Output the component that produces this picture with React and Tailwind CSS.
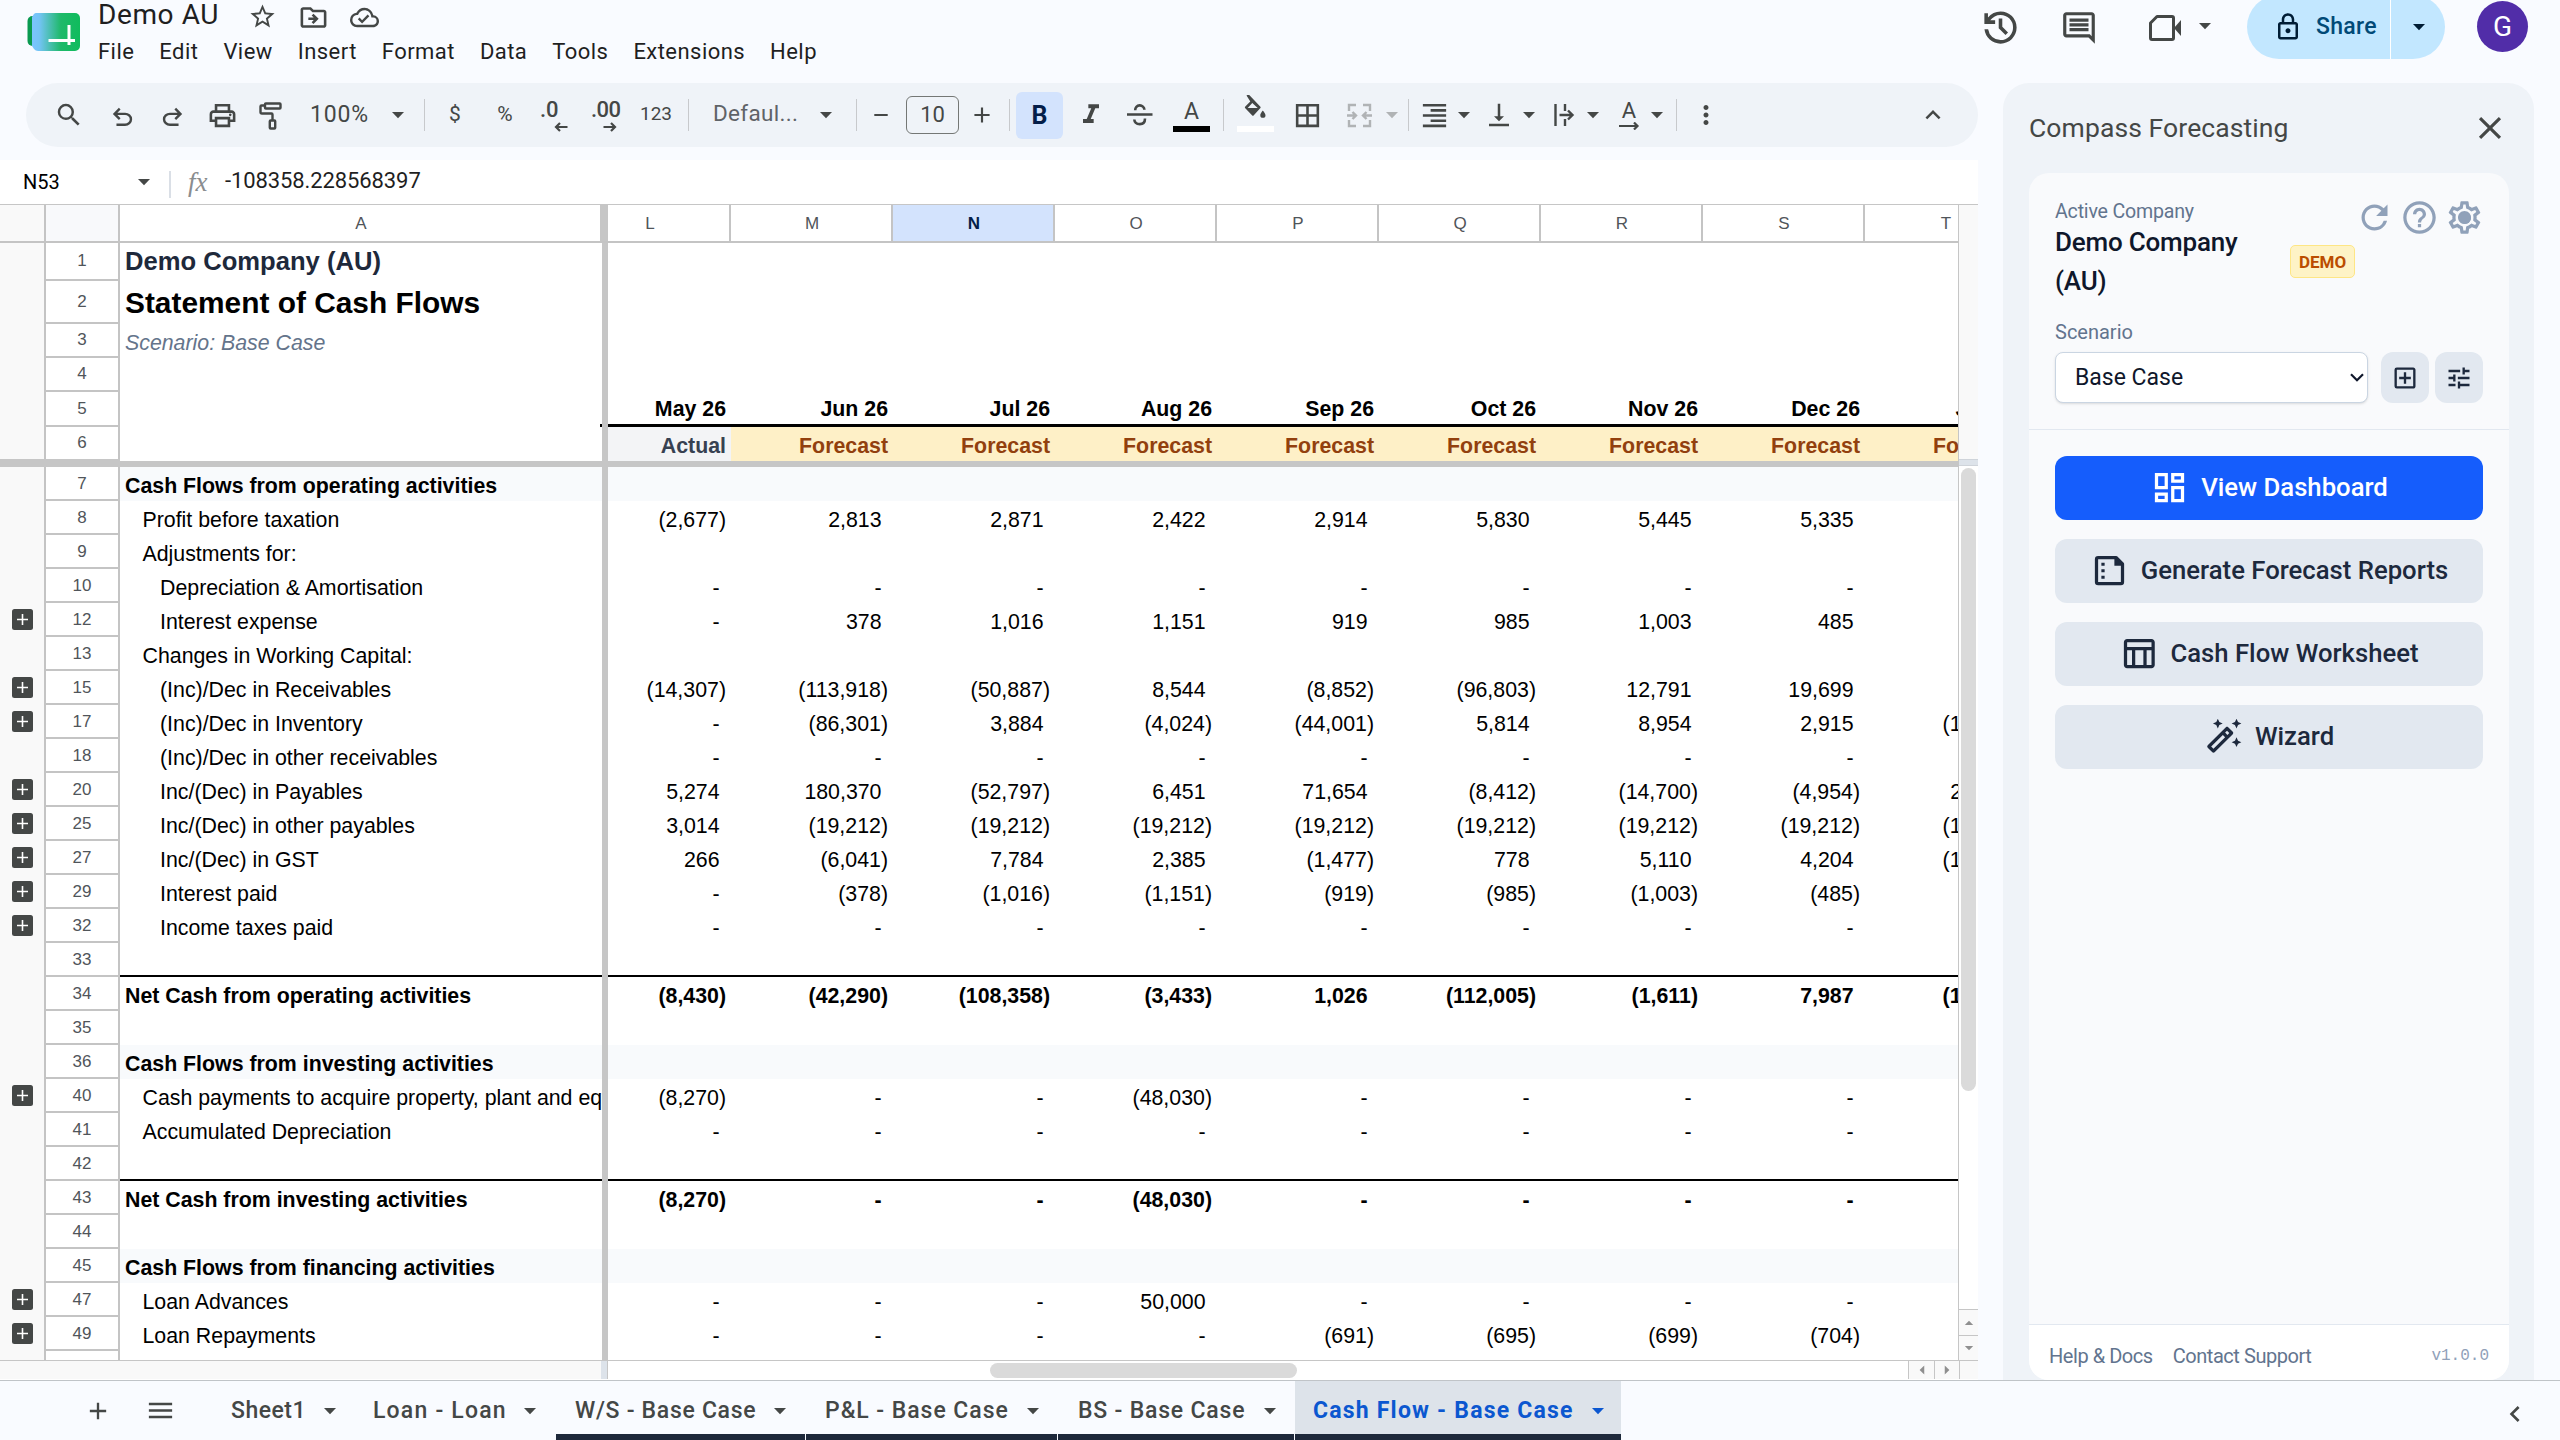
import {
    MdSearch, MdOutlinePrint, MdRemove, MdAdd, MdFormatItalic,
    MdBorderAll, MdFormatAlignRight, MdVerticalAlignBottom, MdMoreVert, MdKeyboardArrowUp,
    MdStarBorder, MdOutlineDriveFileMove, MdOutlineCloudDone, MdOutlineComment, MdOutlineLock,
    MdClose, MdRefresh, MdHelpOutline, MdOutlineSettings, MdOutlineAddBox, MdTune, MdOutlineDashboard,
    MdOutlineTableChart, MdOutlineAutoFixHigh, MdMenu, MdKeyboardArrowLeft,
} from "react-icons/md";

const menus = ["File", "Edit", "View", "Insert", "Format", "Data", "Tools", "Extensions", "Help"];

const columns = ["L", "M", "N", "O", "P", "Q", "R", "S", "T"];
const months = ["May 26", "Jun 26", "Jul 26", "Aug 26", "Sep 26", "Oct 26", "Nov 26", "Dec 26", "Jan 27"];

const dashes = ["-", "-", "-", "-", "-", "-", "-", "-", "-"];

// Scrolling rows. kind: section = shaded heading, total = bold result, rule = empty row with a bottom line
const rows = [
    { n: 7, label: "Cash Flows from operating activities", kind: "section" },
    { n: 8, label: "Profit before taxation", indent: 1, values: ["(2,677)", "2,813", "2,871", "2,422", "2,914", "5,830", "5,445", "5,335", "5,120"] },
    { n: 9, label: "Adjustments for:", indent: 1 },
    { n: 10, label: "Depreciation & Amortisation", indent: 2, values: dashes },
    { n: 12, label: "Interest expense", indent: 2, group: true, values: ["-", "378", "1,016", "1,151", "919", "985", "1,003", "485", "480"] },
    { n: 13, label: "Changes in Working Capital:", indent: 1 },
    { n: 15, label: "(Inc)/Dec in Receivables", indent: 2, group: true, values: ["(14,307)", "(113,918)", "(50,887)", "8,544", "(8,852)", "(96,803)", "12,791", "19,699", "9,120"] },
    { n: 17, label: "(Inc)/Dec in Inventory", indent: 2, group: true, values: ["-", "(86,301)", "3,884", "(4,024)", "(44,001)", "5,814", "8,954", "2,915", "(10,410)"] },
    { n: 18, label: "(Inc)/Dec in other receivables", indent: 2, values: dashes },
    { n: 20, label: "Inc/(Dec) in Payables", indent: 2, group: true, values: ["5,274", "180,370", "(52,797)", "6,451", "71,654", "(8,412)", "(14,700)", "(4,954)", "20,310"] },
    { n: 25, label: "Inc/(Dec) in other payables", indent: 2, group: true, values: ["3,014", "(19,212)", "(19,212)", "(19,212)", "(19,212)", "(19,212)", "(19,212)", "(19,212)", "(19,212)"] },
    { n: 27, label: "Inc/(Dec) in GST", indent: 2, group: true, values: ["266", "(6,041)", "7,784", "2,385", "(1,477)", "778", "5,110", "4,204", "(10,208)"] },
    { n: 29, label: "Interest paid", indent: 2, group: true, values: ["-", "(378)", "(1,016)", "(1,151)", "(919)", "(985)", "(1,003)", "(485)", "(480)"] },
    { n: 32, label: "Income taxes paid", indent: 2, group: true, values: dashes },
    { n: 33, kind: "rule" },
    { n: 34, label: "Net Cash from operating activities", kind: "total", values: ["(8,430)", "(42,290)", "(108,358)", "(3,433)", "1,026", "(112,005)", "(1,611)", "7,987", "(15,280)"] },
    { n: 35 },
    { n: 36, label: "Cash Flows from investing activities", kind: "section" },
    { n: 40, label: "Cash payments to acquire property, plant and equipment", indent: 1, group: true, values: ["(8,270)", "-", "-", "(48,030)", "-", "-", "-", "-", "-"] },
    { n: 41, label: "Accumulated Depreciation", indent: 1, values: dashes },
    { n: 42, kind: "rule" },
    { n: 43, label: "Net Cash from investing activities", kind: "total", values: ["(8,270)", "-", "-", "(48,030)", "-", "-", "-", "-", "-"] },
    { n: 44 },
    { n: 45, label: "Cash Flows from financing activities", kind: "section" },
    { n: 47, label: "Loan Advances", indent: 1, group: true, values: ["-", "-", "-", "50,000", "-", "-", "-", "-", "-"] },
    { n: 49, label: "Loan Repayments", indent: 1, group: true, values: ["-", "-", "-", "-", "(691)", "(695)", "(699)", "(704)", "(708)"] },
];

const sheets = [
    { name: "Sheet1", box: "w-[143px] pl-[18px]", text: "w-[75px] tracking-[0.5px]" },
    { name: "Loan - Loan", box: "w-[199px] pl-[17px]", text: "w-[133px] tracking-[1.2px]" },
    { name: "W/S - Base Case", box: "w-[249px] pl-[19px]", text: "w-[181px] tracking-[0.7px]", line: true },
    { name: "P&L - Base Case", box: "w-[251px] pl-[19px]", text: "w-[184px] tracking-[0.95px]", line: true },
    { name: "BS - Base Case", box: "w-[236px] pl-[20px]", text: "w-[168px] tracking-[0.8px]", line: true },
    { name: "Cash Flow - Base Case", box: "w-[326px] pl-[18px]", text: "w-[261px] tracking-[1.2px] font-bold", line: true, active: true },
];

function Symbol({ d, className }) {
    return (
        <svg viewBox="0 -960 960 960" fill="currentColor" className={className}>
            <path d={d} />
        </svg>
    );
}

function Caret({ className = "" }) {
    return (
        <svg viewBox="0 0 14 8" fill="currentColor" className={`w-[14px] h-2 shrink-0 ${className}`}>
            <path d="M1 1h12L7 7.2z" />
        </svg>
    );
}

function Divider({ className }) {
    return <div className={`w-px h-8 bg-[#c7c9cc] shrink-0 ${className}`}></div>;
}

function Logo() {
    return (
        <svg viewBox="0 0 54 40" className="w-[54px] h-10">
            <defs>
                <linearGradient id="logoFill" x1="0" x2="1" y1="0" y2="0">
                    <stop offset="0" stopColor="#7cc4ff" />
                    <stop offset="0.15" stopColor="#74c4f5" />
                    <stop offset="0.6" stopColor="#1fb96a" />
                    <stop offset="1" stopColor="#0fbc5c" />
                </linearGradient>
            </defs>
            <rect x="0.5" y="4" width="20" height="30" rx="5" fill="#0a9a50" />
            <path d="M9 1h39a5 5 0 0 1 5 5v28a5 5 0 0 1-5 5H11a5 5 0 0 1-4-2l-2-3V5l2-3a4 4 0 0 1 2-1z" fill="url(#logoFill)" />
            <path d="M21.500 28.500h26.500M42 13v20" stroke="#fff" strokeWidth="3" fill="none" />
        </svg>
    );
}

function Header() {
    return (
        <header className="h-[83px] flex items-start overflow-hidden shrink-0">
            <div className="pl-[27px] pt-3">
                <Logo />
            </div>
            <div className="pl-[17px]">
                <div className="flex h-[33px] text-[#444746]">
                    <h1 className="w-[150px] text-[28px] leading-[29px] tracking-[0.6px] text-[#1f1f1f]">Demo AU</h1>
                    <MdStarBorder className="size-[29px] mt-0.5" />
                    <MdOutlineDriveFileMove className="size-[31px] mt-0.5 ml-[21px]" />
                    <MdOutlineCloudDone className="size-[29px] mt-[3px] ml-[21px]" />
                </div>
                <nav className="flex gap-[25px] text-[22px] leading-[37px] tracking-[0.45px] text-[#1f1f1f]">
                    {menus.map((m) => (
                        <span key={m}>{m}</span>
                    ))}
                </nav>
            </div>

            <div className="ml-auto flex items-start text-[#444746]">
                <Symbol
                    className="size-[43px] mt-[6px]"
                    d="M480-120q-138 0-240.500-91.500T122-440h82q14 104 92.500 172T480-200q117 0 198.500-81.500T760-480q0-117-81.500-198.500T480-760q-69 0-129 32t-101 88h110v80H120v-240h80v94q51-64 124.500-99T480-840q75 0 140.500 28.500t114 77q48.500 48.500 77 114T840-480q0 75-28.500 140.500t-77 114q-48.500 48.500-114 77T480-120Zm112-192L440-464v-216h80v184l128 128-56 56Z"
                />
                <MdOutlineComment className="size-[38px] mt-[9px] ml-[38px]" />
                <svg viewBox="0 0 34 28" className="w-[34px] h-7 mt-[14px] ml-[50px]" fill="none" stroke="currentColor" strokeWidth="3">
                    <path d="M9 2.500h15a1.500 1.500 0 0 1 1.500 1.500v20a1.500 1.500 0 0 1-1.500 1.500H4a1.500 1.500 0 0 1-1.500-1.500V9z" strokeLinejoin="round" />
                    <path d="M26 14l7-8v16z" fill="currentColor" stroke="none" />
                </svg>
                <Caret className="mt-[22px] ml-4" />
                <div className="-mt-[5px] ml-[35px] w-[198px] h-16 rounded-full bg-[#c2e7ff] flex overflow-hidden text-[#004a77]">
                    <div className="w-[144px] flex items-center pl-[26px] border-r border-white">
                        <MdOutlineLock className="size-[30px] text-[#001d35]" />
                        <span className="pl-[13px] text-[23px] font-medium tracking-[0.3px]">Share</span>
                    </div>
                    <div className="flex-1 flex items-center pl-[21px] text-[#001d35]">
                        <Caret />
                    </div>
                </div>
                <div className="mt-px ml-8 mr-8 size-[51px] rounded-full bg-[#512da8] text-white text-[28px] flex items-center justify-center">G</div>
            </div>
        </header>
    );
}

function Toolbar() {
    return (
        <div className="ml-[26px] h-16 rounded-full bg-[#eff3f8] flex items-center text-[#444746] shrink-0">
            <MdSearch className="size-[30px] ml-7 shrink-0" />
            <Symbol
                className="size-[29px] ml-6 mt-1 shrink-0"
                d="M280-200v-80h284q63 0 109.500-40T720-420q0-60-46.500-100T564-560H312l104 104-56 56-200-200 200-200 56 56-104 104h252q97 0 166.500 63T800-420q0 94-69.500 157T564-200H280Z"
            />
            <Symbol
                className="size-[29px] ml-[21px] mt-1 shrink-0 -scale-x-100"
                d="M280-200v-80h284q63 0 109.500-40T720-420q0-60-46.500-100T564-560H312l104 104-56 56-200-200 200-200 56 56-104 104h252q97 0 166.500 63T800-420q0 94-69.500 157T564-200H280Z"
            />
            <MdOutlinePrint className="size-[31px] ml-5 shrink-0" />
            <svg viewBox="0 0 23 28" className="w-[23px] h-7 ml-[21px] mt-0.5 shrink-0" fill="none" stroke="currentColor" strokeWidth="2.400">
                <rect x="6" y="1.500" width="15.500" height="5" rx="0.800" />
                <path d="M6 3.500H2.500a1 1 0 0 0-1 1V10a1.500 1.500 0 0 0 1.500 1.500h9.500a1 1 0 0 1 1 1V18" />
                <rect x="10.800" y="18.500" width="5.400" height="8" rx="0.800" />
            </svg>
            <span className="w-[60px] ml-[28px] text-[23px] tracking-[0.8px] whitespace-nowrap">100%</span>
            <Caret className="ml-[21px]" />
            <Divider className="ml-[19px]" />
            <span className="w-4 ml-[22px] text-[21px] text-center">$</span>
            <span className="w-5 ml-8 text-[21px] text-center">%</span>
            <div className="w-7 h-[30px] ml-[25px] text-[22px] font-medium leading-[20px] relative">
                .0
                <svg viewBox="0 0 14 10" className="absolute right-0 -bottom-0.5 w-[14px] h-[10px]" fill="none" stroke="currentColor" strokeWidth="2.200">
                    <path d="M6 1L2 5l4 4M2 5h11.500" />
                </svg>
            </div>
            <div className="w-7 h-[30px] ml-[23px] text-[22px] font-medium leading-[20px] tracking-[-0.5px] relative">
                .00
                <svg viewBox="0 0 14 10" className="absolute right-0.5 -bottom-0.5 w-[14px] h-[10px]" fill="none" stroke="currentColor" strokeWidth="2.200">
                    <path d="M8 1l4 4-4 4M12 5H0.500" />
                </svg>
            </div>
            <span className="w-8 ml-[21px] text-[19px] -mt-0.5">123</span>
            <Divider className="ml-4" />
            <span className="w-[86px] ml-6 text-[22.500px] tracking-[0.3px] text-[#5f6368] -mt-0.5 whitespace-nowrap">Defaul...</span>
            <Caret className="ml-5" />
            <Divider className="ml-[23px]" />
            <MdRemove className="w-5 h-7 scale-[1.15] ml-[14px]" />
            <span className="w-[53px] h-[38px] ml-[15px] border-[1.500px] border-[#747775] rounded-md text-[22px] leading-[35px] text-center">10</span>
            <MdAdd className="w-5 h-7 scale-[1.3] ml-[13px]" />
            <Divider className="ml-[17px]" />
            <span className="w-[47px] h-[47px] ml-[6px] rounded-md bg-[#d3e3fd] text-[#041e49] text-[25px] leading-[47px] font-bold text-center">B</span>
            <MdFormatItalic className="size-[32px] ml-3" />
            <svg viewBox="0 0 30 30" className="size-[30px] ml-[18px]" fill="none" stroke="currentColor" strokeWidth="2.600">
                <path d="M2 14.500h25.500M10.200 10.200a4.600 4.600 0 0 1 9.200-.4M20 18.500c0 3.500-2 5.600-5.200 5.600s-5.300-1.900-5.500-4.600" />
            </svg>
            <span className="w-[37px] ml-[18px] h-[33px] border-b-[6px] border-black text-[23px] leading-[25px] text-center">A</span>
            <Divider className="ml-[13px]" />
            <div className="w-[37px] ml-[13px] h-[33px] border-b-[6px] border-white flex justify-center pr-[3px]">
                <svg viewBox="0 0 24 28" className="w-6 h-7 -mt-1" fill="currentColor">
                    <path d="M4.500 0.500l2-1.300 11.700 12.400a1.200 1.200 0 0 1 0 1.700l-6.400 7a1.200 1.200 0 0 1-1.800 0l-6.700-7a1.200 1.200 0 0 1 0-1.700l5-5.200zM10.300 8l-4.600 5h10z" fillRule="evenodd" />
                    <path d="M20.800 15.500s2.700 3 2.700 4.700a2.600 2.600 0 0 1-5.200 0c0-1.700 2.500-4.700 2.500-4.700z" />
                </svg>
            </div>
            <MdBorderAll className="size-[31px] ml-[18px]" />
            <svg viewBox="0 0 31 31" className="size-[31px] ml-[21px] text-[#b0b3b5]" fill="none" stroke="currentColor" strokeWidth="2.400">
                <path d="M12 5H5v6M5 20v6h7M19 5h7v6M26 20v6h-7M3 15.500h9M8.500 12l3.500 3.500L8.500 19M28 15.500h-9M22.500 12L19 15.500l3.500 3.500" />
            </svg>
            <Caret className="ml-[10px] text-[#b0b3b5]" />
            <Divider className="ml-[9px]" />
            <MdFormatAlignRight className="size-[31px] ml-[10px]" />
            <Caret className="ml-[7px]" />
            <MdVerticalAlignBottom className="size-[30px] ml-[13px]" />
            <Caret className="ml-2" />
            <svg viewBox="0 0 30 30" className="size-[30px] ml-[13px]" fill="none" stroke="currentColor" strokeWidth="2.400">
                <path d="M6.500 4v22M16 4v7M16 19v7M10.500 15h12.500M19 10.500l4.500 4.500-4.500 4.500" />
            </svg>
            <Caret className="ml-[7px]" />
            <div className="w-[30px] h-[30px] ml-[14px] text-[22px] leading-[22px] text-center relative">
                A
                <svg viewBox="0 0 22 8" className="absolute left-1 bottom-0 w-[22px] h-2" fill="none" stroke="currentColor" strokeWidth="2.200">
                    <path d="M1 4h18M16 0.500L19.500 4 16 7.500" />
                </svg>
            </div>
            <Caret className="ml-[6px]" />
            <Divider className="ml-3" />
            <MdMoreVert className="size-[30px] ml-[14px]" />
            <MdKeyboardArrowUp className="size-[30px] ml-auto mr-[30px]" />
        </div>
    );
}

function FormulaBar() {
    return (
        <div className="h-11 mt-[13px] bg-white flex items-center shrink-0">
            <span className="w-[137px] pl-[23px] text-[20px] text-black">N53</span>
            <Caret className="text-[#444746]" />
            <div className="w-0.5 h-[27px] ml-[18px] mr-[17px] mt-1 bg-[#dadfe6]"></div>
            <span className="w-[37px] text-[27px] leading-[30px] italic text-[#8a8d8f] font-['Liberation_Serif',serif]">fx</span>
            <span className="text-[22px] tracking-[-0.1px] text-[#1f1f1f] -mt-1">-108358.228568397</span>
        </div>
    );
}

// Grouping gutter and row number
function RowHead({ n, group, className = "h-[34px]", last }) {
    return (
        <div className={`w-[120px] flex shrink-0 ${className}`}>
            <div className="w-11 flex items-center pl-3 pb-px bg-[#f9f9f9]">
                {group && (
                    <svg viewBox="0 0 21 21" className="size-[21px]">
                        <rect width="21" height="21" rx="2.500" fill="#444746" />
                        <path d="M10.500 5v11M5 10.500h11" stroke="#fff" strokeWidth="1.600" />
                    </svg>
                )}
            </div>
            <div
                className={`w-[76px] border-x-2 border-[#c4c4c4] bg-white text-[17px] text-[#50555a] flex items-center justify-center ${
                    last ? "" : "border-b-2"
                }`}
            >
                {n}
            </div>
        </div>
    );
}

function FreezeBar() {
    return <div className="w-[6px] bg-[#c6c6c6] shrink-0 self-stretch"></div>;
}

function DataRow({ row }) {
    const bold = row.kind === "section" || row.kind === "total";
    const bg = row.kind === "section" ? "bg-[#f8fafc]" : "";
    const rule = row.kind === "rule" ? "after:absolute after:inset-x-0 after:bottom-0 after:h-0.5 after:bg-black" : "";
    const pad = row.indent === 2 ? "pl-[40px]" : row.indent === 1 ? "pl-[22.500px]" : "pl-[5px]";

    return (
        <div className={`flex h-[34px] leading-[38px] whitespace-nowrap ${bold ? "font-bold" : ""}`}>
            <div className="font-normal leading-[31px]">
                <RowHead n={row.n} group={row.group} />
            </div>
            <div className={`w-[482px] shrink-0 relative ${bg} ${rule}`}>
                <div className={`h-[34px] overflow-hidden ${pad}`}>{row.label}</div>
            </div>
            <FreezeBar />
            <div className={`w-[1350px] relative ${bg} ${rule}`}>
                <div className="h-[34px] flex overflow-hidden">
                    <div className="flex -ml-[39px]">
                        {row.values?.map((v, i) => (
                            <div key={i} className={`w-[162px] shrink-0 text-right ${v.startsWith("(") ? "pr-[5px]" : "pr-[11.500px]"}`}>
                                {v}
                            </div>
                        ))}
                    </div>
                </div>
            </div>
        </div>
    );
}

function Grid() {
    return (
        <div className="h-[1157px] w-[1978px] border-t border-[#c6c6c6] bg-white flex font-['Liberation_Sans',Arial,sans-serif] text-[21.330px] text-black overflow-hidden">
            <div className="w-[1958px] shrink-0 overflow-hidden">
                {/* Column letters */}
                <div className="flex h-[38px] border-b-2 border-[#c4c4c4] text-[17px] leading-[37px] text-center text-[#50555a]">
                    <div className="w-11 bg-[#f9f9f9] shrink-0"></div>
                    <div className="w-[76px] border-x-2 border-[#c4c4c4] bg-[#f8f9fb] shrink-0"></div>
                    <div className="w-[480px] shrink-0 pl-0.5">A</div>
                    <div className="w-2 bg-[#c6c6c6] shrink-0"></div>
                    <div className="w-[1350px] flex overflow-hidden">
                        <div className="flex -ml-[39px]">
                            {columns.map((c) => (
                                <div
                                    key={c}
                                    className={`w-[162px] pl-0.5 shrink-0 border-r-2 border-[#c4c4c4] ${
                                        c === "N" ? "bg-[#d3e3fd] font-bold text-[#041e49]" : ""
                                    }`}
                                >
                                    {c}
                                </div>
                            ))}
                        </div>
                    </div>
                </div>

                {/* Frozen rows */}
                <div className="flex h-[218px]">
                    <div>
                        <RowHead n={1} className="h-[38px]" />
                        <RowHead n={2} className="h-[43px]" />
                        <RowHead n={3} />
                        <RowHead n={4} />
                        <RowHead n={5} className="h-[35px]" />
                        <RowHead n={6} className="h-8" last />
                        <div className="h-0.5 bg-[#c6c6c6]"></div>
                    </div>
                    <div className="w-[482px] pl-[5px] whitespace-nowrap shrink-0">
                        <div className="h-[38px] text-[25.600px] leading-[37px] font-bold text-[#1e293b]">Demo Company (AU)</div>
                        <div className="h-[43px] text-[29.870px] leading-[44px] font-bold">Statement of Cash Flows</div>
                        <div className="h-[34px] leading-[38px] italic text-[#64748b]">Scenario: Base Case</div>
                        <div className="h-[66px]"></div>
                        <div className="h-[3px] w-0.5 ml-[475px] bg-black"></div>
                    </div>
                    <FreezeBar />
                    <div className="w-[1350px] overflow-hidden pt-[149px] font-bold">
                        <div className="h-[35px] w-[1500px] -ml-[39px] flex border-b-[3px] border-black leading-[34px] text-right">
                            {months.map((m) => (
                                <div key={m} className="w-[162px] shrink-0 pr-[5px]">{m}</div>
                            ))}
                        </div>
                        <div className="h-[34px] -ml-[39px] flex leading-[38px] text-right">
                            {months.map((m, i) => (
                                <div
                                    key={m}
                                    className={`w-[162px] shrink-0 pr-[5px] ${
                                        i === 0 ? "bg-[#f3f4f6] text-[#374151]" : "bg-[#fef0c7] text-[#92400e]"
                                    }`}
                                >
                                    {i === 0 ? "Actual" : "Forecast"}
                                </div>
                            ))}
                        </div>
                    </div>
                </div>
                <div className="h-[6px] bg-[#c6c6c6]"></div>

                {rows.map((row) => (
                    <DataRow key={row.n} row={row} />
                ))}
                <div className="flex h-[9px]">
                    <RowHead className="h-[9px]" last />
                    <div className="w-[482px] shrink-0"></div>
                    <FreezeBar />
                </div>
            </div>

            {/* Vertical scrollbar */}
            <div className="w-5 border-l border-[#c6c6c6] flex flex-col">
                <div className="h-[254px] bg-[#f9f9f9]"></div>
                <div className="h-[7px] bg-[#dde3ea] border-y border-[#cfd4da]"></div>
                <div className="mt-0.5 w-[15px] h-[623px] ml-0.5 rounded-full bg-[#dadada]"></div>
                <div className="mt-auto h-[26px] border-t border-[#c6c6c6] bg-[#f9f9f9] flex items-center justify-center text-[#8f8f8f]">
                    <Caret className="scale-[0.7] rotate-180" />
                </div>
                <div className="h-[25px] border-t border-[#c6c6c6] bg-[#f9f9f9] flex items-center justify-center text-[#8f8f8f]">
                    <Caret className="scale-[0.7]" />
                </div>
            </div>
        </div>
    );
}

function HorizontalScroll() {
    return (
        <div className="h-5 w-[1978px] border-t border-[#c6c6c6] flex shrink-0 bg-white pb-px">
            <div className="w-[601px] bg-[#f9f9f9]"></div>
            <div className="w-[6px] bg-[#dde3ea]"></div>
            <div className="w-[1301px] border-l border-[#c6c6c6] pl-[382px] pt-0.5">
                <div className="w-[307px] h-[15px] rounded-full bg-[#dadada]"></div>
            </div>
            <div className="w-[26px] shrink-0 border-l border-[#c6c6c6] bg-[#f9f9f9] text-[#8f8f8f] flex items-center justify-center">
                <Caret className="scale-[0.75] rotate-90" />
            </div>
            <div className="w-[25px] shrink-0 border-l border-[#c6c6c6] bg-[#f9f9f9] text-[#8f8f8f] flex items-center justify-center">
                <Caret className="scale-[0.75] -rotate-90" />
            </div>
            <div className="flex-1 border-l border-[#c6c6c6] bg-[#f9f9f9]"></div>
        </div>
    );
}

function ReportIcon({ className }) {
    return (
        <svg viewBox="0 0 24 24" fill="none" stroke="currentColor" strokeWidth="2" className={className}>
            <path d="M16 4H5a1 1 0 0 0-1 1v14a1 1 0 0 0 1 1h14a1 1 0 0 0 1-1V8z" strokeLinejoin="round" />
            <path d="M15 3.500V9h5.500z" fill="currentColor" stroke="none" />
            <path d="M7 7.200h2v1.800H7zM7 11.200h2V13H7zM7 15.200h2V17H7z" fill="currentColor" stroke="none" />
        </svg>
    );
}

const actions = [
    { name: "View Dashboard", icon: MdOutlineDashboard, primary: true },
    { name: "Generate Forecast Reports", icon: ReportIcon },
    { name: "Cash Flow Worksheet", icon: MdOutlineTableChart },
    { name: "Wizard", icon: MdOutlineAutoFixHigh },
];

function SidePanel() {
    return (
        <aside className="ml-[25px] w-[531px] h-[1297px] rounded-t-[26px] bg-[#eff3f8] pl-[26px] pr-[25px] flex flex-col">
            <div className="h-[90px] flex items-center justify-between text-[#444746] shrink-0">
                <h2 className="text-[26.500px] leading-[38px] tracking-[0.1px]">Compass Forecasting</h2>
                <MdClose className="size-[38px]" />
            </div>

            <div className="flex-1 rounded-[20px] bg-[#f9fafc] overflow-hidden flex flex-col">
                <div className="h-[257px] border-b border-[#e2e8f0] px-[26px] shrink-0">
                    <div className="flex justify-between pt-[25px] h-[127px]">
                        <div className="w-[300px]">
                            <div className="text-[19.600px] leading-[26px] pt-px tracking-[-0.2px] text-[#62748e]">Active Company</div>
                            <div className="flex items-center justify-between">
                                <div className="text-[26px] leading-[39px] tracking-[-0.200px] -mt-0.5 font-medium text-[#0f172b] w-[200px]">Demo Company (AU)</div>
                                <span className="h-[33px] w-[65px] mb-[4px] rounded-[5px] border border-[#fee685] bg-[#fef3c6] text-[#bb4d00] text-[17px] leading-[32px] font-bold text-center">DEMO</span>
                            </div>
                        </div>
                        <div className="flex gap-[6px] text-[#90a1b9] -mr-px">
                            <MdRefresh className="size-[39px]" />
                            <MdHelpOutline className="size-[39px]" />
                            <span className="relative size-[39px]">
                                <MdOutlineSettings className="size-[39px]" />
                                <span className="absolute left-[13.500px] top-[13.500px] size-3 rounded-full bg-[#90a1b9]"></span>
                            </span>
                        </div>
                    </div>
                    <div className="text-[20px] leading-[26px] mt-[19px] text-[#62748e]">Scenario</div>
                    <div className="flex mt-[7px]">
                        <div className="w-[313px] h-[51px] rounded-lg border border-[#cad5e2] bg-white shadow-sm flex items-center justify-between pl-[19px] pr-[3px] text-[23px] text-[#0f172b]">
                            <span className="pt-0.5">Base Case</span>
                            <svg viewBox="0 0 14 9" className="w-[14px] h-[9px]" fill="none" stroke="currentColor" strokeWidth="2.200">
                                <path d="M1 1.200l6 6 6-6" />
                            </svg>
                        </div>
                        <div className="size-12 h-[51px] ml-[13px] rounded-xl bg-[#e2e8f0] flex items-center justify-center text-[#1d293d]">
                            <MdOutlineAddBox className="size-7" />
                        </div>
                        <div className="size-12 h-[51px] ml-[6px] rounded-xl bg-[#e2e8f0] flex items-center justify-center text-[#1d293d]">
                            <MdTune className="size-7" />
                        </div>
                    </div>
                </div>

                <div className="flex-1 px-[26px] pt-[26px] flex flex-col gap-[19px]">
                    {actions.map((a) => (
                        <button
                            key={a.name}
                            className={`h-16 pb-px rounded-xl flex items-center justify-center gap-3 text-[25.700px] font-medium ${
                                a.primary ? "bg-[#155dfc] text-white" : "bg-[#e2e8f0] text-[#1d293d]"
                            }`}
                        >
                            <a.icon className="size-[39px]" />
                            {a.name}
                        </button>
                    ))}
                </div>

                <div className="h-[56px] border-t border-[#e2e8f0] bg-white flex items-center px-5 text-[20px] tracking-[-0.450px] text-[#62748e]">
                    <span className="pt-1.5">Help & Docs</span>
                    <span className="pt-1.5 pl-5">Contact Support</span>
                    <span className="ml-auto pt-1.5 font-['Liberation_Mono',monospace] text-[16px] tracking-normal text-[#90a1b9]">v1.0.0</span>
                </div>
            </div>
        </aside>
    );
}

function SheetTabs() {
    return (
        <footer className="h-[60px] border-t border-[#c0c4c8] bg-[#f9fbff] flex text-[#444746] shrink-0">
            <div className="w-[213px] flex items-center pl-[84px]">
                <MdAdd className="size-[28px]" />
                <MdMenu className="size-[31px] ml-[33px]" />
            </div>
            {sheets.map((s) => (
                <div
                    key={s.name}
                    className={`${s.box} h-full flex items-center whitespace-nowrap text-[23px] font-medium ${
                        s.line ? "border-b-[6px] border-[#1e293b] ml-px pt-[6px]" : ""
                    } ${s.active ? "bg-[#dde3ea] text-[#0b57d0]" : ""}`}
                >
                    <span className={`pt-0.5 ${s.text}`}>{s.name}</span>
                    <Caret className="ml-[17px]" />
                </div>
            ))}
            <MdKeyboardArrowLeft className="size-[32px] ml-auto mr-[29px] mt-[17px]" />
        </footer>
    );
}

function App() {
    return (
        <div className="w-[2560px] h-[1440px] overflow-hidden bg-[#f9fbff] flex flex-col font-[Roboto,sans-serif]">
            <Header />
            <div className="flex h-[1297px]">
                <main className="w-[1978px] flex flex-col shrink-0">
                    <Toolbar />
                    <FormulaBar />
                    <Grid />
                    <HorizontalScroll />
                </main>
                <SidePanel />
            </div>
            <SheetTabs />
        </div>
    );
}

export default App;
